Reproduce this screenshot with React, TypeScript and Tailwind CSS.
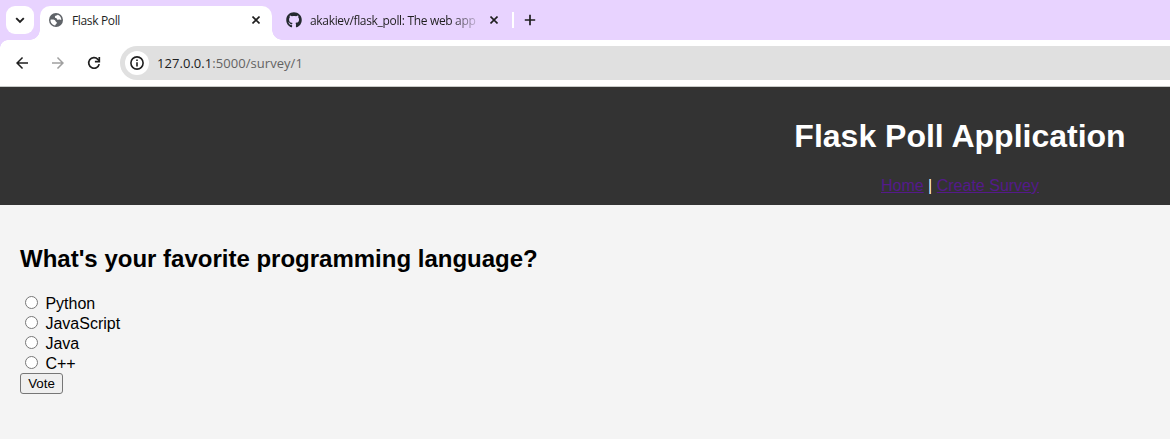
import { ReactNode } from "react";
import { MdArrowBack, MdArrowForward } from "react-icons/md";
import { FaGithub } from "react-icons/fa";

const languages = ["Python", "JavaScript", "Java", "C++"];

function Globe() {
  return (
    <svg viewBox="0 0 14 14" className="size-[14px] shrink-0">
      <circle cx="7" cy="7" r="7" fill="#5f6368" />
      <g fill="white">
        <path d="M8.7 1.7c-.6 1-2.2.7-2.7 1.5-.4.7.3 1.1.2 1.8 1-.2 1.500.3 1.8 1.200.3.9 1.200.7 1.800.4.8-.4 1.700-.2 2.500.5C12.400 4.600 11 2.500 8.700 1.700Z" />
        <path d="M1.500 6.700c1.500-.2 3.200-.1 4.200.4.9.5.7 1.500 1.600 1.900.9.4.8 1.300.1 1.700-.9.400-.6 1.200-1.300 1.700C3.400 12 1.300 9.700 1.500 6.700Z" />
      </g>
    </svg>
  );
}

function TabStrip() {
  return (
    <div className="flex h-[40px] bg-[#e8d3ff] text-[#1f1f1f]">
      <div className="relative flex w-[40px] justify-center pt-[6px]">
        <button className="flex size-[28px] items-center justify-center rounded-[9px] bg-white">
          <svg viewBox="0 0 10 10" className="size-[10px]" fill="none" stroke="currentColor" strokeWidth="1.9">
            <path d="M1.2 3.1 5 6.900l3.800-3.800" />
          </svg>
        </button>
        <span className="absolute right-0 bottom-0 size-[10px] bg-[radial-gradient(circle_at_0_0,transparent_9.5px,white_10px)]" />
      </div>
      <div className="mt-[6px] flex h-[34px] w-[232px] items-center rounded-t-[10px] bg-white pb-[6px] pl-[9px]">
        <Globe />
        <Title className="ml-[9px] mt-[1px] w-[170px] text-[12px] tracking-[-0.35px]">Flask Poll</Title>
        <Cross className="ml-[10px]" />
      </div>
      <div className="relative flex items-start pl-[14px] pt-[12px]">
        <span className="absolute bottom-0 left-0 size-[10px] bg-[radial-gradient(circle_at_100%_0,transparent_9.5px,white_10px)]" />
        <FaGithub className="size-[16px] shrink-0 text-[#24292f]" />
        <Title className="ml-[8px] w-[174px] text-[12px] tracking-[-0.33px] [mask-image:linear-gradient(to_right,black_142px,transparent_172px)]">
          akakiev/flask_poll: The web app
        </Title>
        <Cross className="ml-[6px] mt-[4px]" />
        <span className="ml-[14px] h-[16px] w-[2px] bg-white" />
        <svg viewBox="0 0 12 12" className="ml-[10px] mt-[2px] size-[12px]" stroke="currentColor" strokeWidth="1.7">
          <path d="M6 .8v10.400M.8 6h10.400" />
        </svg>
      </div>
    </div>
  );
}

function Title({ className, children }: { className: string; children: ReactNode }) {
  return (
    <span className={`block overflow-hidden whitespace-nowrap font-['Open_Sans',sans-serif] leading-[18px] ${className}`}>
      {children}
    </span>
  );
}

function Cross({ className }: { className: string }) {
  return (
    <svg viewBox="0 0 8 8" className={`size-[8px] shrink-0 ${className}`} stroke="currentColor" strokeWidth="1.6">
      <path d="m.5.5 7 7M7.500.5l-7 7" />
    </svg>
  );
}

function Toolbar() {
  return (
    <div className="relative flex h-[47px] items-center border-b border-[#c8cbc9] bg-white text-[#1f1f1f]">
      <span className="absolute left-0 top-0 size-[8px] bg-[radial-gradient(circle_at_100%_100%,transparent_7.5px,#e8d3ff_8px)]" />
      <MdArrowBack className="ml-[13px] size-[18px]" />
      <MdArrowForward className="ml-[18px] size-[18px] text-[#a0a0a0]" />
      <svg viewBox="0 0 14 14" className="ml-[20px] size-[14px]" fill="none" stroke="currentColor" strokeWidth="1.7">
        <path d="M12.200 8.100A5.300 5.300 0 1 1 10.900 3.300L12.300 4.700" />
        <path d="M12.300 1v4.600H7.900" />
      </svg>
      <div className="ml-[19px] flex h-[34px] flex-1 items-center rounded-l-full bg-[#e0e0e0] pl-[5px]">
        <span className="flex size-[24px] items-center justify-center rounded-full bg-white">
          <svg viewBox="0 0 14 14" className="size-[14px]" fill="none" stroke="currentColor" strokeWidth="1.6">
            <circle cx="7" cy="7" r="6.100" />
            <path d="M7 6.200v4.200M7 3.500v1.600" />
          </svg>
        </span>
        <span className="ml-[8px] font-['Open_Sans',sans-serif] text-[13px] leading-[20px] tracking-[0.05px] text-[#636363]">
          <span className="text-[#202020]">127.0.0.1</span>:5000/survey/1
        </span>
      </div>
    </div>
  );
}

export default function App() {
  return (
    <div className="flex h-[440px] w-[1170px] flex-col overflow-hidden bg-white font-['Liberation_Sans',Arial,sans-serif] text-[16px] text-black">
      <TabStrip />
      <Toolbar />
      <div className="h-[352px] overflow-hidden bg-[#f4f4f4]">
        <header className="h-[118px] w-[1920px] bg-[#333] pt-[31px] text-center text-white">
          <h1 className="text-[32px] font-bold leading-[37px]">Flask Poll Application</h1>
          <nav className="mt-[22px] leading-[18px]">
            <a href="#" className="text-[#551a8b] underline">Home</a> |{" "}
            <a href="#" className="text-[#551a8b] underline">Create Survey</a>
          </nav>
        </header>
        <main className="px-[20px] pt-[40px]">
          <h2 className="text-[24px] font-bold leading-[28px]">What's your favorite programming language?</h2>
          <form className="mt-[20px]">
            {languages.map((name) => (
              <label key={name} className="flex h-[20px] items-center pl-[5px] leading-[18px]">
                <input type="radio" name="language" className="mb-[1px] size-[13px]" />
                <span className="ml-[7.450px] mt-[2px]">{name}</span>
              </label>
            ))}
            <button
              type="button"
              className="block h-[21px] w-[43px] rounded-[3px] border border-[#767676] bg-[#efefef] text-[13.333px] leading-[19px]"
            >
              Vote
            </button>
          </form>
        </main>
      </div>
    </div>
  );
}
